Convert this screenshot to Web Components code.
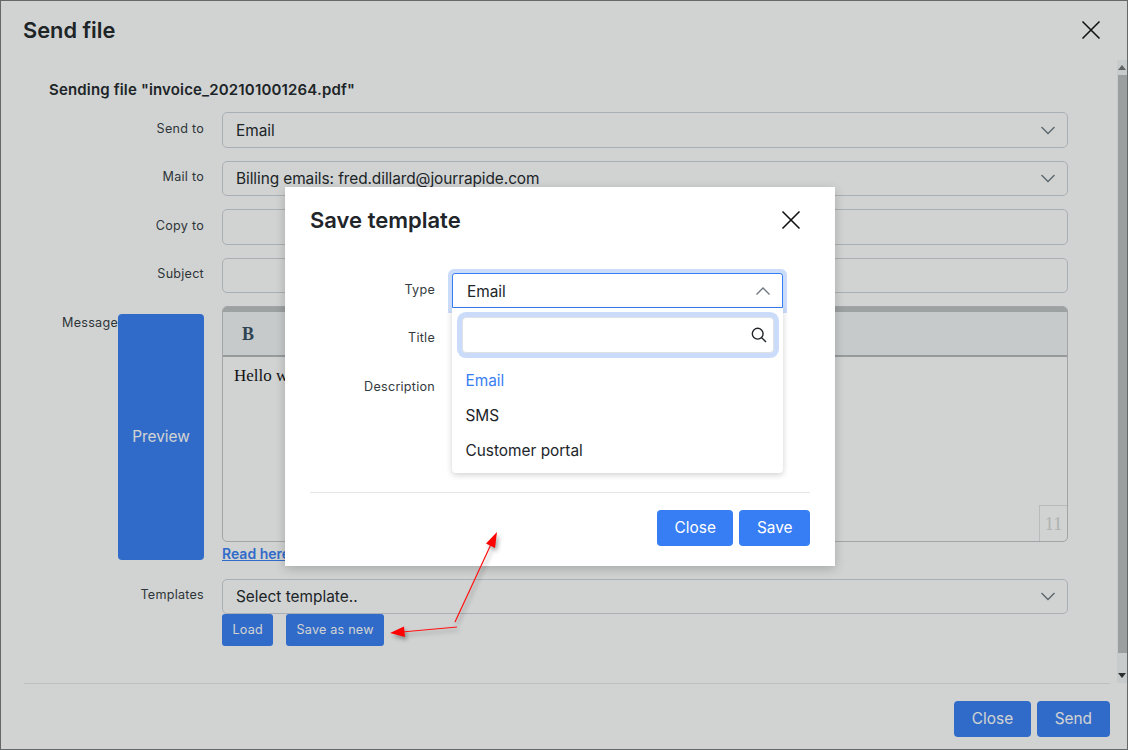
<!DOCTYPE html>
<html lang="en">
<head>
<meta charset="utf-8">
<title>Send file</title>
<style>
html,body{margin:0;padding:0;height:750px;overflow:hidden;background:#fff;font-family:Inter,"Liberation Sans",sans-serif;color:#212529}
</style>
</head>
<body>
<template id="t-btn"><style>
:host{display:inline-flex;align-items:center;justify-content:center;box-sizing:border-box;height:36px;padding:0 18px;background:#377df3;color:#fff;border-radius:4px;font:400 15.4px/1 Inter,sans-serif}
:host([small]){height:32px;padding:0 10px;font-size:12.6px;letter-spacing:.22px;border-radius:3px}
</style><slot></slot></template>

<template id="t-select"><style>
:host{display:flex;align-items:center;justify-content:space-between;box-sizing:border-box;height:35.5px;padding:2px 11px 0 13px;border:1px solid #ced4da;border-radius:5px;background:#fff;color:#212529;font:400 15.4px/24px Inter,sans-serif;position:relative;white-space:nowrap}
:host([open]){border-color:#377df3;border-radius:3px 3px 0 0;padding-left:14px}
:host([open])::before{content:"";position:absolute;left:-5px;right:-5px;top:-5px;bottom:-6px;background:#cbdcfb;border-radius:6px 6px 0 0;z-index:-1}
svg{width:16px;height:16px;flex:none;fill:none;stroke:#6c757d;stroke-width:1.3;margin-top:-2px}
</style><span><slot></slot></span><svg viewBox="0 0 16 16"><path id="c" d="M1.5 5l6.5 6.5L14.500 5"/></svg></template>

<template id="t-input"><style>
:host{display:block;box-sizing:border-box;height:35.500px;border:1px solid #ced4da;border-radius:5px;background:#fff}
</style></template>

<template id="t-row"><style>
:host{display:grid;grid-template-columns:181px 846px;column-gap:18px;margin-bottom:13px}
.l{text-align:right;font:400 12.6px/20px Inter,sans-serif;letter-spacing:.25px;color:#343a40;padding-top:6.6px}
::slotted(.shift){margin-right:86px}
</style><div class="l"><slot name="label"></slot></div><div><slot></slot></div></template>

<template id="t-close"><style>
:host{display:block;width:20px;height:20px}
svg{display:block;width:20px;height:20px;stroke:#111;stroke-width:1.6;fill:none}
</style><svg viewBox="0 0 20 20"><path d="M1.500 1.500l17 17M18.500 1.500l-17 17"/></svg></template>

<template id="t-editor"><style>
:host{display:flex;flex-direction:column;box-sizing:border-box;height:236px;border:1px solid #c4c6c8;border-radius:5px;background:#fff;position:relative;overflow:hidden}
.bar{height:43px;box-sizing:content-box;border-top:5px solid #bfc1c1;border-bottom:2px solid #b8baba;background:#f2f4f4;display:flex;align-items:center;padding-left:19px;font:700 18px/1 "Liberation Serif",serif;color:#374d5f;flex:none}
.txt{padding:7px 11px;font:400 17px/24px "Liberation Serif",serif;color:#111;flex:1}
.cnt{position:absolute;right:0;bottom:0;width:27px;height:35px;border:1px solid #dfe1e1;border-right:0;border-bottom:0;display:flex;align-items:center;justify-content:center;font:400 18px/1 "Liberation Serif",serif;color:#d4d6d6}
</style><div class="bar">B</div><div class="txt"><slot></slot></div><div class="cnt">11</div></template>

<template id="t-send"><style>
:host{display:flex;flex-direction:column;box-sizing:border-box;width:1128px;height:750px;border:1px solid #777a7a;background:#fff;position:relative}
header{height:59px;flex:none;display:flex;align-items:center;justify-content:space-between;padding:0 26px 2px 22px;box-sizing:border-box}
h1{margin:0;font:600 21.8px/30px Inter,sans-serif;color:#212529}
.body{flex:1;display:flex;min-height:0}
.main{flex:1;min-width:0;padding:0 0 0 22px;position:relative}
h2{margin:0;padding:20px 0 12px 26px;font:600 15px/20px Inter,sans-serif;letter-spacing:.16px;color:#212529}
.sb{width:10px;flex:none;background:#f4f5f5;display:flex;flex-direction:column;align-items:flex-end;padding-right:0}
.up,.dn{height:15px;width:10px;display:flex;align-items:center;justify-content:center;flex:none}
.up i{border:4px solid transparent;border-top:0;border-bottom:5px solid #6f7272}
.dn i{border:4px solid transparent;border-bottom:0;border-top:5px solid #333}
.thumb{width:9px;height:578px;background:#bcbebe}
.track{flex:1}
footer{height:66px;flex:none;margin:0 17px 0 23px;border-top:1px solid #e6e8e8;display:flex;justify-content:flex-end;align-items:flex-start;padding-top:17px;gap:6px;box-sizing:border-box}
.link{font:600 14px/20px Inter,sans-serif;color:#377df3;text-decoration:underline;margin:2px 0 14.5px;display:block}
.pv{position:absolute;left:117px;top:254px;width:86px;height:246px;display:flex}
.pv ui-btn{width:100%;height:100%;box-sizing:border-box}
.btns{display:flex;gap:13px}
</style>
<header><h1>Send file</h1><close-x></close-x></header>
<div class="body">
<div class="main">
<h2>Sending file "invoice_202101001264.pdf"</h2>
<form-row><span slot="label">Send to</span><select-box>Email</select-box></form-row>
<form-row><span slot="label">Mail to</span><select-box style="letter-spacing:-.07px">Billing emails: fred.dillard@jourrapide.com</select-box></form-row>
<form-row><span slot="label">Copy to</span><text-box></text-box></form-row>
<form-row><span slot="label">Subject</span><text-box></text-box></form-row>
<form-row style="margin-bottom:0"><span slot="label" class="shift">Message</span><div><rich-editor>Hello w</rich-editor><a class="link">Read here</a></div></form-row>
<form-row style="margin-bottom:0"><span slot="label">Templates</span><div><select-box>Select template..</select-box><div class="btns"><ui-btn small style="padding:0 10.5px">Load</ui-btn><ui-btn small>Save as new</ui-btn></div></div></form-row>
<div class="pv"><ui-btn>Preview</ui-btn></div>
</div>
<div class="sb"><div class="up"><i></i></div><div class="thumb"></div><div class="track"></div><div class="dn"><i></i></div></div>
</div>
<footer><ui-btn style="padding:0 17.5px">Close</ui-btn><ui-btn>Send</ui-btn></footer>
</template>

<template id="t-dd"><style>
:host{display:block;position:absolute;left:0;top:100%;width:331px;height:165px;box-sizing:border-box;background:#fff;border-radius:0 0 4px 4px;box-shadow:0 2px 6px rgba(0,0,0,.18);padding:9px 9px 0 10px}
.s{height:36px;box-sizing:border-box;border:1px solid #dee2e6;border-radius:4px;box-shadow:0 0 0 5px #cbdcfb;display:flex;align-items:center;justify-content:flex-end;padding-right:6px;background:#fff}
svg{width:16px;height:16px;fill:none;stroke:#212529;stroke-width:1.4}
.o{padding-top:10px}
::slotted(div){height:35px;padding-left:3.5px;font:400 15.4px/35px Inter,sans-serif;color:#212529}
::slotted([sel]){color:#377df3}
</style><div class="s"><svg viewBox="0 0 16 16"><circle cx="6.700" cy="6.700" r="5.400"/><path d="M10.700 10.700L15 15"/></svg></div><div class="o"><slot></slot></div></template>

<template id="t-save"><style>
:host{display:flex;flex-direction:column;box-sizing:border-box;position:absolute;left:285px;top:187px;width:550px;height:379px;background:#fff;box-shadow:0 3px 10px rgba(0,0,0,.2);padding:0 25px;font-family:Inter,sans-serif}
header{height:68px;flex:none;display:flex;align-items:center;justify-content:space-between;padding-right:9px;padding-bottom:2px;box-sizing:border-box}
h1{margin:0;font:600 22px/30px Inter,sans-serif;color:#212529}
.f{height:238px;flex:none;padding-top:18px;box-sizing:border-box;border-bottom:1px solid #e6e8e8;display:grid;grid-template-columns:125px 331px;column-gap:17px;grid-template-rows:35px 13px 36px 13px 1fr;align-content:start}
.l{text-align:right;font:400 12.6px/20px Inter,sans-serif;letter-spacing:.25px;color:#343a40;padding-top:7px}
.sel{position:relative;grid-column:2;grid-row:1;isolation:isolate}
.sel select-box{height:35px}
footer{flex:1;display:flex;justify-content:flex-end;gap:6px;padding-top:17px}
footer ui-btn{padding:0 17.5px}
</style>
<header><h1>Save template</h1><close-x></close-x></header>
<div class="f">
<div class="l" style="grid-row:1">Type</div>
<div class="sel"><select-box open>Email</select-box><drop-down><div sel>Email</div><div>SMS</div><div>Customer portal</div></drop-down></div>
<div class="l" style="grid-row:3">Title</div>
<div class="l" style="grid-row:5">Description</div>
</div>
<footer><ui-btn>Close</ui-btn><ui-btn>Save</ui-btn></footer>
</template>

<template id="t-arrows"><style>
:host{display:block;position:absolute;left:0;top:0;width:1128px;height:750px;pointer-events:none}
svg{display:block;width:1128px;height:750px;overflow:visible;filter:drop-shadow(2px 3px 2px rgba(0,0,0,.35))}
</style><svg viewBox="0 0 1128 750"><path d="M455 622L493 540M457 627L402 632" stroke="#f11" stroke-width="1.200" fill="none"/><path d="M497 532L486 543.500L495 548ZM390 633L404 626.500L405 637Z" fill="#f00"/></svg></template>

<template id="t-backdrop"><style>
:host{display:block;position:absolute;left:0;top:0;width:1128px;height:750px;background:rgba(25,35,35,.2)}
</style></template>

<send-dialog></send-dialog>
<modal-backdrop></modal-backdrop>
<save-template></save-template>
<note-arrows></note-arrows>

<script>
const def=(name,tpl)=>customElements.define(name,class extends HTMLElement{
  constructor(){super();this.attachShadow({mode:"open"}).appendChild(document.getElementById(tpl).content.cloneNode(true));}
  connectedCallback(){
    if(name==="select-box"&&this.hasAttribute("open"))this.shadowRoot.getElementById("c").setAttribute("d","M1.5 11.500L8 5l6.500 6.500");
  }
});
[["ui-btn","t-btn"],["select-box","t-select"],["text-box","t-input"],["form-row","t-row"],["close-x","t-close"],["rich-editor","t-editor"],["send-dialog","t-send"],["drop-down","t-dd"],["save-template","t-save"],["note-arrows","t-arrows"],["modal-backdrop","t-backdrop"]].forEach(([n,t])=>def(n,t));
</script>
</body>
</html>
